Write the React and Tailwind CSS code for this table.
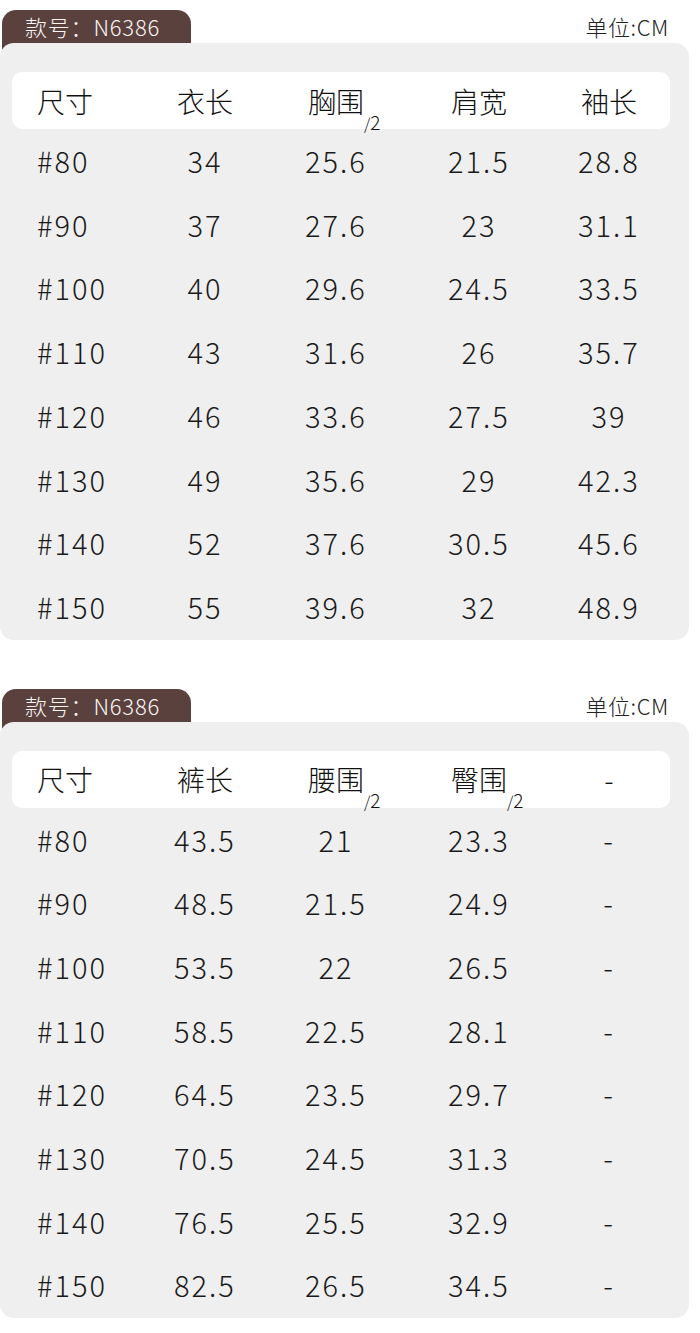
const FONT = '"Noto Sans CJK SC", "Noto Sans", sans-serif';

const top = {
  cols: ['尺寸', '衣长', '胸围', '肩宽', '袖长'],
  half: [false, false, true, false, false],
  rows: [
    ['#80', '34', '25.6', '21.5', '28.8'],
    ['#90', '37', '27.6', '23', '31.1'],
    ['#100', '40', '29.6', '24.5', '33.5'],
    ['#110', '43', '31.6', '26', '35.7'],
    ['#120', '46', '33.6', '27.5', '39'],
    ['#130', '49', '35.6', '29', '42.3'],
    ['#140', '52', '37.6', '30.5', '45.6'],
    ['#150', '55', '39.6', '32', '48.9'],
  ],
};

const bottom = {
  cols: ['尺寸', '裤长', '腰围', '臀围', '-'],
  half: [false, false, true, true, false],
  rows: [
    ['#80', '43.5', '21', '23.3', '-'],
    ['#90', '48.5', '21.5', '24.9', '-'],
    ['#100', '53.5', '22', '26.5', '-'],
    ['#110', '58.5', '22.5', '28.1', '-'],
    ['#120', '64.5', '23.5', '29.7', '-'],
    ['#130', '70.5', '24.5', '31.3', '-'],
    ['#140', '76.5', '25.5', '32.9', '-'],
    ['#150', '82.5', '26.5', '34.5', '-'],
  ],
};

const grid = 'grid grid-cols-[128px_130px_132px_154px_106px] items-center';

function Cell({ i, children }) {
  return (
    <div className={i === 0 ? 'pl-[25px] text-left' : 'text-center'}>{children}</div>
  );
}

function SizeTable({ data }) {
  return (
    <section>
      <div className="flex items-start justify-between pr-[31px]">
        <div className="ml-[2px] h-[42px] w-[189px] rounded-t-[14px] bg-[#5a413e]">
          <div className="flex h-[33px] items-center pl-[23px] text-[22px] font-light tracking-[0.8px] text-[#fbf5f4]">
            款号：N6386
          </div>
        </div>
        <div className="flex h-[33px] items-center text-[22px] font-light tracking-[0.6px] text-[#222]">单位:CM</div>
      </div>
      <div className="relative -mt-[9px] mr-[11px] rounded-[14px] bg-[#efefef] pt-[29px] pb-[1px]">
        <div className={`${grid} mx-[12px] mr-[19px] h-[57px] rounded-[10px] bg-white text-[28px] font-light text-[#111]`}>
          {data.cols.map((c, i) => (
            <Cell key={i} i={i}>
              <span className="relative">
                {c}
                {data.half[i] && (
                  <span className="absolute left-full bottom-[-10px] flex items-end whitespace-nowrap font-light leading-none">
                    <span className="text-[16px]">/</span>
                    <span className="text-[19px]">2</span>
                  </span>
                )}
              </span>
            </Cell>
          ))}
        </div>
        <div className="mx-[12px]">
          {data.rows.map((r, ri) => (
            <div key={ri} className={`${grid} h-[63.7px] text-[29px] font-light tracking-[2px] text-[#1a1a1a]`}>
              {r.map((v, i) => (
                <Cell key={i} i={i}>{v}</Cell>
              ))}
            </div>
          ))}
        </div>
      </div>
    </section>
  );
}

export default function App() {
  return (
    <div className="w-[700px] min-h-[1333px] bg-white pt-[10px]" style={{ fontFamily: FONT }}>
      <SizeTable data={top} />
      <div className="h-[49px]" />
      <SizeTable data={bottom} />
    </div>
  );
}
